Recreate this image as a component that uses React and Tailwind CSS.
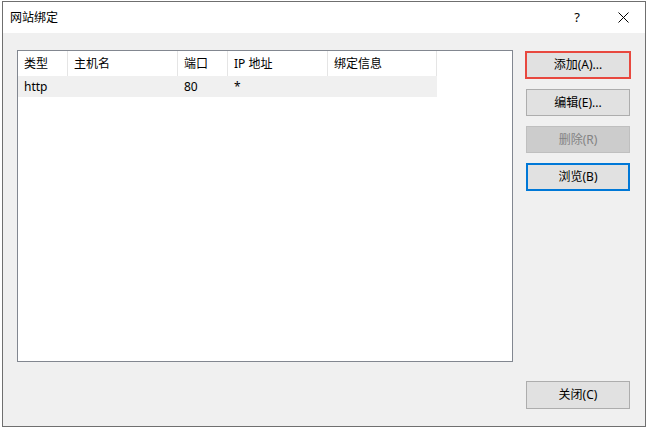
export default function App() {
    const font = { fontFamily: '"Noto Sans", "Noto Sans CJK SC", sans-serif' };
    const cols = [
        { label: "类型", w: "w-[50px]" },
        { label: "主机名", w: "w-[110px]" },
        { label: "端口", w: "w-[50px]" },
        { label: "IP 地址", w: "w-[100px]" },
        { label: "绑定信息", w: "w-[109px]" },
    ];
    const row = ["http", "", "80", "*", ""];

    return (
        <div className="w-[648px] h-[429px] bg-white pt-[1px] pl-[2px] text-[12px] text-black" style={font}>
            <div className="w-[644px] h-[426px] border border-[#6f6f6f] flex flex-col">
                <div className="h-[31px] bg-white flex items-center pl-[7px] shrink-0">
                    <span className="leading-none">网站绑定</span>
                    <span className="ml-auto mr-[38px] text-[13px] leading-none">?</span>
                    <svg width="11" height="11" viewBox="0 0 11 11" className="mr-[16px]">
                        <path d="M0.5 0.5 L10.5 10.5 M10.5 0.5 L0.5 10.5" stroke="#000" strokeWidth="1" />
                    </svg>
                </div>
                <div className="flex-1 bg-[#f0f0f0] flex pl-[14px] pt-[17px] pr-[14px]">
                    <div className="w-[496px] h-[312px] border border-[#828790] bg-white">
                        <div className="flex h-[25px]">
                            {cols.map((c, i) => (
                                <div
                                    key={i}
                                    className={`${c.w} h-full flex items-center pl-[6px] border-r border-[#e5e5e5]`}
                                >
                                    <span className="leading-none">{c.label}</span>
                                </div>
                            ))}
                        </div>
                        <div className="flex h-[21px] bg-[#f0f0f0] w-[419px]">
                            {row.map((v, i) => (
                                <div
                                    key={i}
                                    className={`${cols[i].w} h-full flex items-center pl-[6px]`}
                                >
                                    <span className="leading-none">{v}</span>
                                </div>
                            ))}
                        </div>
                    </div>
                    <div className="ml-auto w-[106px] flex flex-col">
                        <div className="h-[28px] mt-[1px] border-2 border-[#e8483f] bg-[#e1e1e1] flex items-center justify-center">
                            <span className="leading-none">添加(A)...</span>
                        </div>
                        <div className="h-[27px] mt-[10px] mx-[1px] border border-[#adadad] bg-[#e1e1e1] flex items-center justify-center">
                            <span className="leading-none">编辑(E)...</span>
                        </div>
                        <div className="h-[27px] mt-[10px] mx-[1px] border border-[#bfbfbf] bg-[#cccccc] text-[#838383] flex items-center justify-center">
                            <span className="leading-none">删除(R)</span>
                        </div>
                        <div className="h-[28px] mt-[10px] mx-[1px] border-2 border-[#0078d7] bg-[#e1e1e1] flex items-center justify-center">
                            <span className="leading-none">浏览(B)</span>
                        </div>
                        <div className="h-[28px] mt-auto mb-[17px] mx-[1px] border border-[#adadad] bg-[#e1e1e1] flex items-center justify-center">
                            <span className="leading-none">关闭(C)</span>
                        </div>
                    </div>
                </div>
            </div>
        </div>
    );
}
